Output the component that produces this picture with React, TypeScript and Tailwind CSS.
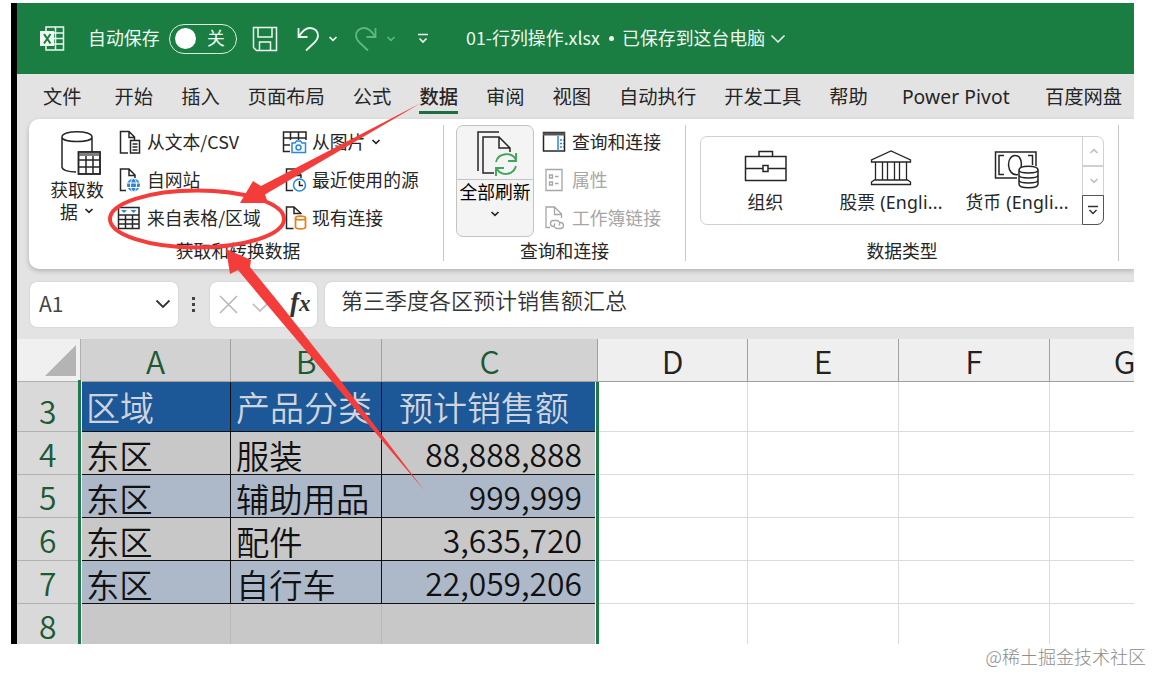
import React from 'react';
import clsx from 'clsx';

type IconProps = { w: number; h: number; className?: string; children: React.ReactNode };

const Icon: React.FC<IconProps> = ({ w, h, className, children }) => (
  <svg
    width={w}
    height={h}
    viewBox={`0 0 ${w} ${h}`}
    fill="none"
    stroke="currentColor"
    strokeWidth="1.5"
    className={clsx('shrink-0', className)}
  >
    {children}
  </svg>
);

const Chevron: React.FC<{ className?: string }> = ({ className }) => (
  <Icon w={10} h={6} className={className}>
    <path d="M1.5 1L5 4.4L8.5 1" strokeWidth="1.7" />
  </Icon>
);

const ExcelIcon = () => (
  <Icon w={25} h={25}>
    <path d="M6 1h17.5v23H6zM6 7h18M14 12.5h10M6 18h18M15.5 1v23" />
    <rect x="0" y="5" width="14" height="15" fill="currentColor" stroke="none" />
    <path d="M4 8l6.5 9.5M10.500 8L4 17.500" stroke="#1a7d42" strokeWidth="2" />
  </Icon>
);

const SaveIcon = () => (
  <Icon w={26} h={26}>
    <path d="M1.500 1.500h23v23H4.500l-3-3zM6 1.500v9.500h14V1.500M7.500 24.500V16h11v8.500" />
  </Icon>
);

const UndoIcon = () => (
  <Icon w={22} h={26}>
    <path d="M1.500 2v9h9M2 10.500C5 5.500 8.500 2 13 2c5 0 8 3.500 8 7.500 0 3-1.500 5-3.500 7L9 24.500" strokeWidth="1.8" />
  </Icon>
);

const CsvIcon = () => (
  <Icon w={22} h={24}>
    <path d="M9 23H1.500V1.500H10l5.500 5.500v3M10 1.500V7.500h5.500" />
    <path d="M11.500 10.500h9v12.500h-9zM13.500 14h5M13.500 17h5M13.500 20h5" fill="#fff" />
  </Icon>
);

const WebIcon = () => (
  <Icon w={22} h={24}>
    <path d="M7 22.500H1.500V1H10l6 6v3M10 1V7.500h6" />
    <circle cx="14.500" cy="17" r="6.500" fill="#2b88d8" stroke="none" />
    <path d="M8 15h13M8 19.500h13" stroke="#fff" strokeWidth="1" />
    <ellipse cx="14.500" cy="17" rx="3" ry="6.500" stroke="#fff" strokeWidth="1" />
  </Icon>
);

const TableIcon = () => (
  <Icon w={24} h={24}>
    <path d="M1.500 1.500h20.500v21H1.500zM1.500 9h20.500M1.500 13.500h20.500M1.500 18h20.500M8.500 9v13.500M15.500 9v13.500" />
    <path d="M4 4h6l-3 3zM13.500 4h6l-3 3z" fill="#2b88d8" stroke="none" />
  </Icon>
);

const PictureIcon = () => (
  <Icon w={25} h={24}>
    <path d="M8 21.500H1.500V2H24v8M1.500 8H24M1.500 15H8M8.500 2v8M16.500 2v8" />
    <path d="M10 13h3l1.500-2h4L20 13h3.500v9.500H10z" stroke="#2b88d8" fill="#fff" />
    <circle cx="16.500" cy="17.500" r="2.500" stroke="#2b88d8" />
  </Icon>
);

const RecentIcon = () => (
  <Icon w={22} h={24}>
    <path d="M8 22.500H1.500V1H10l6 6v3M10 1V7.500h6" />
    <circle cx="14.500" cy="17" r="6" stroke="#2b88d8" fill="#fff" />
    <path d="M14.500 13v4.500h3.500" />
  </Icon>
);

const ConnectionIcon = () => (
  <Icon w={22} h={24}>
    <path d="M8.500 22.500H1.500V1H9l7.500 7M9 1V7.500h7" />
    <path d="M10.500 12c0-2.500 10-2.500 10 0v9c0 2.500-10 2.500-10 0zM10.500 12c0 2.500 10 2.500 10 0" stroke="#e8821e" fill="#fff" strokeWidth="1.800" />
  </Icon>
);

const DatabaseIcon = () => (
  <Icon w={42} h={46}>
    <path d="M2 7c0-7 30-7 30 0v15M2 7c0 6 30 6 30 0M2 7v30c0 3 6 5 14 5" />
    <path d="M18.500 22h21.500v22H18.500z" fill="#fff" />
    <path d="M18.500 24h21.500" stroke="#808080" strokeWidth="4" />
    <path d="M18.500 22h21.500v22H18.500zM18.500 30h21.500M18.500 37h21.500M26 26v18M33 26v18" />
  </Icon>
);

const RefreshIcon = () => (
  <Icon w={42} h={46}>
    <path d="M2 40V1h21M18 42H7V6h16l11 11v4M23 6v11h11" />
    <g stroke="#3fa55b" strokeWidth="1.900">
      <path d="M20 31c2-9 16-11 20-2M40 22v8h-8M40 35c-3 10-15 10-19 3M20 45v-8h8" />
    </g>
  </Icon>
);

const QueriesIcon = () => (
  <Icon w={24} h={22}>
    <path d="M1.500 1.500h21v18.500h-21z" />
    <path d="M1 3h22" strokeWidth="3" stroke="#555" />
    <path d="M16 5v15" stroke="#2b88d8" />
    <path d="M18 9h4M18 12.500h4M18 16h4" stroke="#2b88d8" strokeDasharray="2 1" />
  </Icon>
);

const PropertiesIcon = () => (
  <Icon w={24} h={24}>
    <path d="M4 1.500h16v21H4zM7.500 7h3v3h-3zM7.500 14h3v3h-3zM13 8.500h3.500M13 15.500h3.500" strokeWidth="1.300" />
  </Icon>
);

const LinksIcon = () => (
  <Icon w={24} h={24}>
    <path d="M8 21.500H4V1h8.500l7 7v4M12.500 1v7.500h7" strokeWidth="1.300" />
    <path d="M13 20.500h-1.500a3 3 0 010-6H15a3 3 0 012 5M17 16.500h1.500a3 3 0 010 6H15a3 3 0 01-2-5" strokeWidth="1.300" />
  </Icon>
);

const BriefcaseIcon = () => (
  <Icon w={44} h={36}>
    <path d="M1.500 6.500h40.500v24H1.500zM1.500 18.500h17M24.500 18.500h17.500M15 6.500V1.500h13.500v5M19 15.500h5v6h-5z" />
  </Icon>
);

const BankIcon = () => (
  <Icon w={42} h={36}>
    <path d="M1.500 12v-2L21 1l19.500 9v2zM1.500 34.500v-2.500l3-2h33l3 2v2.500zM5.500 12v18M12.500 12v18M17.500 12v18M24.500 12v18M29.500 12v18M36.500 12v18" strokeWidth="1.300" />
  </Icon>
);

const CurrencyIcon = () => (
  <Icon w={46} h={40}>
    <path d="M23 28H1.500V2H42v14" />
    <path d="M10 5.500H5v19h5M34 5.500h4.500V15M24 24.500c-12 2-12-19-3-19 6 0 7 7 6 12" />
    <path d="M25 20c0-5 19-5 19 0v14c0 5-19 5-19 0zM25 20c0 4 19 4 19 0M25 25c0 4 19 4 19 0M25 30c0 4 19 4 19 0" fill="#fff" />
  </Icon>
);

const TitleBar = () => (
  <header className="flex h-[71px] items-center bg-[#1a7d42] pl-[23px] text-[17.900px] leading-[26px] text-[#eefaf1]">
    <ExcelIcon />
    <span className="ml-[23px] w-[81px] whitespace-nowrap pb-[3px]">自动保存</span>
    <div className="flex h-[30px] w-[68px] items-center rounded-full border-[1.500px] border-[#d9f2e0] pl-[5px]">
      <span className="size-[21px] rounded-full bg-white" />
      <span className="ml-[11px] pb-[2px] leading-none">关</span>
    </div>
    <div className="ml-[15px] flex items-center">
      <SaveIcon />
      <div className="ml-[19px]"><UndoIcon /></div>
      <Chevron className="ml-[9px]" />
      <div className="ml-[17px] flex items-center text-[#5fb683]">
        <div className="-scale-x-100"><UndoIcon /></div>
        <Chevron className="ml-[9px]" />
      </div>
      <Icon w={12} h={11} className="ml-[21px]">
        <path d="M1 1.500h10M2.500 5.500L6 9l3.500-3.500" strokeWidth="1.700" />
      </Icon>
    </div>
    <span className="ml-[37px] w-[135px] whitespace-nowrap pb-[3px]">01-行列操作.xlsx</span>
    <span className="mx-[8px] size-[5px] rounded-full bg-current" />
    <span className="whitespace-nowrap pb-[3px]">已保存到这台电脑</span>
    <Icon w={16} h={10} className="ml-[5px]">
      <path d="M1.500 1.500L8 8l6.500-6.500" />
    </Icon>
  </header>
);

const tabs = ['文件', '开始', '插入', '页面布局', '公式', '数据', '审阅', '视图', '自动执行', '开发工具', '帮助', 'Power Pivot', '百度网盘'];

const TabBar = () => (
  <nav className="flex h-[45px] items-center gap-[28px] whitespace-nowrap pl-[26px] text-[19.300px] text-[#262626]">
    {tabs.map((tab) => (
      <span
        key={tab}
        className={clsx(
          'flex h-[35px] items-center leading-none',
          tab === '数据' && 'border-b-[3px] border-[#1d6f42] pt-[3px] font-medium',
          tab === '文件' && 'mr-[5px]',
          tab === 'Power Pivot' && 'ml-[6px] mr-[7px] w-[108px] font-["Noto_Sans"] tracking-[0.080px]'
        )}
      >
        {tab}
      </span>
    ))}
  </nav>
);

const Command: React.FC<{ icon: React.ReactNode; label: string; box: string; arrow?: boolean; disabled?: boolean }> = ({
  icon,
  label,
  box,
  arrow,
  disabled,
}) => (
  <div className={clsx('flex h-[38px] items-center whitespace-nowrap', disabled && 'text-[#a6a6a6]')}>
    <span className={clsx('flex shrink-0 items-center', box)}>{icon}</span>
    <span className="pb-[2px]">{label}</span>
    {arrow && <Chevron className="ml-[6px]" />}
  </div>
);

const GroupLabel: React.FC<{ children: React.ReactNode }> = ({ children }) => (
  <div className="flex h-[24px] items-center justify-center whitespace-nowrap pb-[2px]">{children}</div>
);

const Divider = () => <div className="mt-[6px] h-[136px] w-px shrink-0 bg-[#c8c8c8]" />;

const galleryItems = [
  { label: '组织', icon: <BriefcaseIcon />, cell: 'w-[129px]' },
  { label: '股票 (Engli...', icon: <BankIcon />, cell: 'w-[122px]' },
  { label: '货币 (Engli...', icon: <CurrencyIcon />, cell: 'w-[130px]' },
];

const Ribbon = () => (
  <section className="ml-[12px] flex h-[150px] rounded-l-[10px] bg-white text-[17.800px] leading-[22px] text-[#262626] shadow-[0_2px_5px_rgba(0,0,0,0.22)]">
    <div className="w-[414px] shrink-0">
      <div className="flex h-[120px] pt-[4px]">
        <div className="ml-[21px] flex w-[54px] flex-col items-center pt-[7px]">
          <div className="ml-[7px]"><DatabaseIcon /></div>
          <span className="mt-[2px] whitespace-nowrap">获取数</span>
          <span className="flex items-center gap-[6px]">
            据 <Chevron />
          </span>
        </div>
        <div className="ml-[15px] w-[163px]">
          <Command icon={<CsvIcon />} label="从文本/CSV" box="w-[28px]" />
          <Command icon={<WebIcon />} label="自网站" box="w-[28px]" />
          <Command icon={<TableIcon />} label="来自表格/区域" box="-ml-[2px] w-[30px]" />
        </div>
        <div>
          <Command icon={<PictureIcon />} label="从图片" box="w-[30px]" arrow />
          <Command icon={<RecentIcon />} label="最近使用的源" box="w-[30px] pl-[3px]" />
          <Command icon={<ConnectionIcon />} label="现有连接" box="w-[30px] pl-[3px]" />
        </div>
      </div>
      <GroupLabel>
        <span className="ml-[4px]">获取和转换数据</span>
      </GroupLabel>
    </div>
    <Divider />
    <div className="w-[241px] shrink-0">
      <div className="flex h-[120px] pt-[4px]">
        <div className="ml-[12px] mt-[2px] flex h-[112px] w-[78px] flex-col items-center rounded-[7px] border border-[#c3c3c3] bg-[#f4f4f4]">
          <div className="flex h-[54px] w-full items-center justify-center border-b border-[#c3c3c3] pl-[4px] pt-[3px]"><RefreshIcon /></div>
          <span className="whitespace-nowrap text-black">全部刷新</span>
          <Chevron className="mt-[9px]" />
        </div>
        <div className="ml-[9px]">
          <Command icon={<QueriesIcon />} label="查询和连接" box="-ml-px w-[30px]" />
          <Command icon={<PropertiesIcon />} label="属性" box="-ml-px w-[30px]" disabled />
          <Command icon={<LinksIcon />} label="工作簿链接" box="-ml-px w-[30px]" disabled />
        </div>
      </div>
      <GroupLabel>查询和连接</GroupLabel>
    </div>
    <Divider />
    <div className="w-[432px] shrink-0">
      <div className="h-[120px] pt-[17px]">
        <div className="ml-[14px] flex h-[89px] w-[404px] rounded-[7px] border border-[#d0d0d0]">
          <div className="flex grow">
            {galleryItems.map((item) => (
              <div key={item.label} className={clsx('flex shrink-0 flex-col items-center pt-[13px]', item.cell)}>
                <div className="h-[41px]">{item.icon}</div>
                <span className="whitespace-nowrap font-['Noto_Sans','Noto_Sans_CJK_SC',sans-serif] tracking-[0.200px]">{item.label}</span>
              </div>
            ))}
          </div>
          <div className="-my-px -mr-px flex w-[23px] flex-col border-l border-[#d0d0d0] text-[#c0c0c0]">
            <div className="flex h-[31px] items-center justify-center border-b-2 border-[#d0d0d0]"><Chevron className="rotate-180" /></div>
            <div className="flex h-[28px] items-center justify-center"><Chevron /></div>
            <div className="-ml-px flex h-[30px] items-center justify-center rounded-br-[7px] border-[1.500px] border-[#555] text-[#333]">
              <Icon w={12} h={11}>
                <path d="M1 1.500h10M2.500 5L6 8.500l3.500-3.500" />
              </Icon>
            </div>
          </div>
        </div>
      </div>
      <GroupLabel>数据类型</GroupLabel>
    </div>
    <Divider />
  </section>
);

const FormulaBar = () => (
  <div className="flex h-[70px] items-center pl-[13px] text-[#333]">
    <div className="flex h-[45px] w-[148px] items-center justify-between rounded-[7px] bg-white pl-[9px] pr-[7px] shadow-[0_0_2px_rgba(0,0,0,0.15)]">
      <span className="text-[21px] text-[#444]">A1</span>
      <Icon w={16} h={10}>
        <path d="M1.500 1.500L8 8l6.500-6.500" strokeWidth="1.800" />
      </Icon>
    </div>
    <div className="ml-[14px] flex flex-col gap-[3px]">
      <span className="size-[3px] bg-[#444]" />
      <span className="size-[3px] bg-[#444]" />
      <span className="size-[3px] bg-[#444]" />
    </div>
    <div className="ml-[15px] flex h-[45px] w-[107px] items-center rounded-[7px] bg-white pl-[9px] shadow-[0_0_2px_rgba(0,0,0,0.15)]">
      <Icon w={19} h={19} className="text-[#b5b5b5]">
        <path d="M1 1l17 17M18 1L1 18" />
      </Icon>
      <Icon w={24} h={17} className="ml-[14px] text-[#c4c4c4]">
        <path d="M1 8l7 7L22.500 1" strokeWidth="1.800" />
      </Icon>
      <span className="ml-[14px] pb-[3px] font-['Liberation_Serif',serif] text-[27px] font-bold italic leading-none text-[#333]">
        <span>f</span>
        <span className="text-[23px]">x</span>
      </span>
    </div>
    <div className="ml-[8px] flex h-[45px] grow items-center rounded-l-[7px] bg-white pb-[9px] pl-[16px] text-[22px] font-[350] text-[#333] shadow-[0_0_2px_rgba(0,0,0,0.15)]">
      第三季度各区预计销售额汇总
    </div>
  </div>
);

const columns = [
  { name: 'A', selected: true },
  { name: 'B', selected: true },
  { name: 'C', selected: true },
  { name: 'D', selected: false },
  { name: 'E', selected: false },
  { name: 'F', selected: false },
  { name: 'G', selected: false },
];

const rows = [
  { n: 3, cells: ['区域', '产品分类', '预计销售额'] },
  { n: 4, cells: ['东区', '服装', '88,888,888'] },
  { n: 5, cells: ['东区', '辅助用品', '999,999'] },
  { n: 6, cells: ['东区', '配件', '3,635,720'] },
  { n: 7, cells: ['东区', '自行车', '22,059,206'] },
  { n: 8, cells: ['', '', ''] },
];

const gridCols = 'grid grid-cols-[64px_150px_151px_216px_150px_151px_151px_150px]';

const Sheet = () => (
  <div className="relative w-[1183px] text-[31.800px] font-[350] leading-none">
    <div className={clsx(gridCols, 'h-[43px]')}>
      <div className="flex items-end justify-end border-b border-r border-[#b0b0b0] bg-[#f0f0f0] pb-[5px] pr-[4px]">
        <svg width="31" height="31" viewBox="0 0 31 31">
          <path d="M31 0V31H0z" fill="#b4b4b4" />
        </svg>
      </div>
      {columns.map((col) => (
        <div
          key={col.name}
          className={clsx(
            'flex items-center justify-center border-b border-r border-[#a0a0a0] pt-[2px]',
            col.selected ? 'bg-[#d2d2d2] text-[#1c5a34]' : 'bg-[#efefef] text-[#222]'
          )}
        >
          {col.name}
        </div>
      ))}
    </div>
    {rows.map((row) => {
      const head = row.n === 3;
      const empty = row.n === 8;
      return (
        <div key={row.n} className={clsx(gridCols, head ? 'h-[50px]' : 'h-[43px]')}>
          <div className={clsx('flex items-center border-b border-[#b0b0b0] bg-[#d9d9d9] pl-[22px] text-[#1c5a34]', head ? 'pt-[8px]' : 'pt-px')}>
            {row.n}
          </div>
          {row.cells.map((cell, i) => (
            <div
              key={i}
              className={clsx(
                'flex items-center whitespace-nowrap border-b border-r',
                empty ? 'border-[#b8b8b8] bg-[#c8c8c8]' : 'border-[#111]',
                head && 'bg-[#1c5797] text-[34px] text-[#d0d4dc]',
                !head && !empty && 'text-[#111]',
                !head && !empty && (i === 2 ? 'pt-[2px]' : 'pt-[3px]'),
                !head && i < 2 && 'text-[33.300px]',
                !empty && !head && (row.n % 2 ? 'bg-[#adb9c8]' : 'bg-[#c8c8c8]'),
                i < 2 && 'pl-[5px]',
                i === 2 && head && 'pl-[17px]',
                i === 2 && !head && 'justify-end pr-[15px]'
              )}
            >
              {cell}
            </div>
          ))}
          {columns.slice(3).map((col) => (
            <div key={col.name} className="border-b border-r border-[#dcdcdc] bg-white" />
          ))}
        </div>
      );
    })}
    {/* selection edges */}
    <div className="absolute left-[61px] top-[41px] h-[270px] w-[4px] border-r border-white bg-[#20794a]" />
    <div className="absolute left-[578px] top-[43px] h-[270px] w-[4px] border-l border-white bg-[#20794a]" />
  </div>
);

const Annotations = () => (
  <svg className="absolute left-0 top-0" width="1152" height="673" viewBox="0 0 1152 673">
    <ellipse cx="197" cy="219" rx="87" ry="28.500" fill="none" stroke="#f43d3a" strokeWidth="4" />
    <path d="M240 203L253 181L261 186L421 103L265 194.500L268 203Z" fill="#f43d3a" />
    <path d="M226 249L251 260L250 267L280 304L340 380L424 490L340 391L263 300L238 270L230 274Z" fill="#f43d3a" />
  </svg>
);

const App: React.FC = () => {
  return (
    <div className="relative h-[673px] w-[1152px] overflow-hidden bg-white pl-[11px] pt-[3px] font-['Noto_Sans_CJK_SC',sans-serif]">
      <main className="h-[641px] w-[1123px] overflow-hidden border-l-[6px] border-black bg-[#e3e3e3]">
        <TitleBar />
        <TabBar />
        <Ribbon />
        <FormulaBar />
        <Sheet />
      </main>
      <footer className="flex h-[25px] items-center justify-end text-[18px] font-light text-[#8c8c8c]">
        <span className="mr-[6px]">@稀土掘金技术社区</span>
      </footer>
      <Annotations />
    </div>
  );
};

export default App;
